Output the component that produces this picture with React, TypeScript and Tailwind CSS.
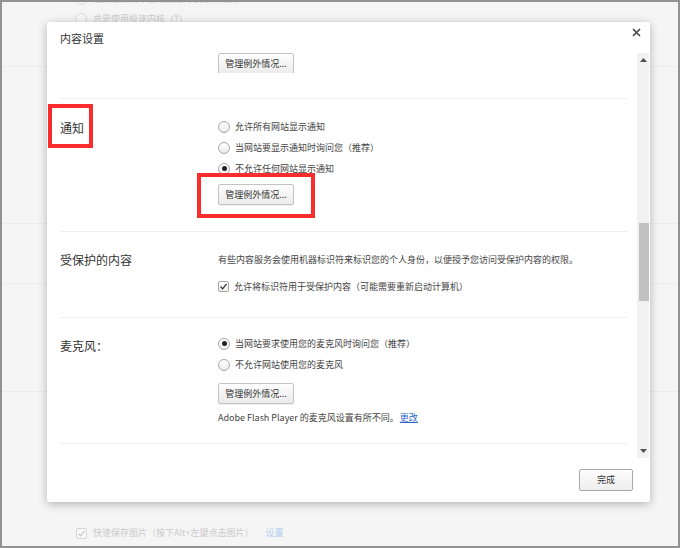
import React from "react";

const FONT = "font-['Noto_Sans_CJK_SC','Microsoft_YaHei',sans-serif]";

function Radio({ checked = false, faded = false }: { checked?: boolean; faded?: boolean }) {
  return (
    <span
      className={`flex h-[12px] w-[12px] shrink-0 items-center justify-center rounded-full border ${
        faded ? "border-[#dcdcdc] bg-[#f7f7f7]" : "border-[#a6a6a6] bg-gradient-to-b from-white to-[#ececec]"
      }`}
    >
      {checked && <span className="h-[5px] w-[5px] rounded-full bg-[#222]" />}
    </span>
  );
}

function Checkbox({ faded = false }: { faded?: boolean }) {
  return (
    <span
      className={`flex h-[11px] w-[11px] shrink-0 items-center justify-center rounded-[2px] border ${
        faded ? "border-[#d6d6d6] bg-[#f9f9f9]" : "border-[#a6a6a6] bg-gradient-to-b from-white to-[#ededed]"
      }`}
    >
      <svg width="9" height="9" viewBox="0 0 9 9">
        <path
          d="M1.5 4.6 L3.6 6.8 L7.6 1.8"
          fill="none"
          stroke={faded ? "#c9c9c9" : "#333"}
          strokeWidth="1.3"
        />
      </svg>
    </span>
  );
}

function ManageButton() {
  return (
    <button className="flex h-[21px] w-[76px] items-center justify-center rounded-[2px] border border-[#c3c3c3] bg-gradient-to-b from-[#fdfdfd] to-[#ececec] text-[9px] text-[#333] shadow-[0_1px_0_rgba(0,0,0,0.06)]">
      管理例外情况...
    </button>
  );
}

function OptionRow({ children, checked }: { children: React.ReactNode; checked?: boolean }) {
  return (
    <div className="flex h-[21px] items-center gap-[5px]">
      <Radio checked={checked} />
      <span className="text-[9px] text-[#444]">{children}</span>
    </div>
  );
}

function Divider() {
  return <div className="h-px bg-[#eeeeee]" />;
}

function Section({
  label,
  children,
  className = "",
  labelClass = "",
}: {
  label: React.ReactNode;
  children: React.ReactNode;
  className?: string;
  labelClass?: string;
}) {
  return (
    <div className={`relative flex ${className}`}>
      <div className={`w-[158px] shrink-0 text-[12px] text-[#333] ${labelClass}`}>{label}</div>
      <div className="flex flex-1 flex-col">{children}</div>
    </div>
  );
}

function Dialog() {
  return (
    <div className={`absolute left-[45px] top-[20px] flex h-[480px] w-[603px] flex-col rounded-[2px] bg-white shadow-[0_2px_10px_rgba(0,0,0,0.28)] ${FONT}`}>
      <div className="relative flex h-[31px] items-center pl-[13px] pt-[1px]">
        <span className="text-[11px] text-[#333]">内容设置</span>
        <svg className="absolute right-[9px] top-[6px]" width="9" height="9" viewBox="0 0 9 9">
          <path d="M1 1 L8 8 M8 1 L1 8" stroke="#444" strokeWidth="1.6" />
        </svg>
      </div>

      <div className="flex h-[405px]">
        <div className="flex-1 overflow-hidden pl-[13px] pr-[10px]">
          <div className="h-[45px] pl-[158px]">
            <div className="h-[20px] overflow-hidden">
              <ManageButton />
            </div>
          </div>
          <Divider />

          <Section label="通知" className="pb-[26px] pt-[17px]" labelClass="pt-[3px] text-[12.5px]">
            <OptionRow>允许所有网站显示通知</OptionRow>
            <OptionRow>当网站要显示通知时询问您（推荐）</OptionRow>
            <OptionRow checked>不允许任何网站显示通知</OptionRow>
            <div className="mt-[5px]">
              <ManageButton />
            </div>
            <div className="absolute left-[-12px] top-[5px] h-[44px] w-[45px] border-4 border-[#fb2c2c]" />
            <div className="absolute left-[137px] top-[74px] h-[45px] w-[118px] border-4 border-[#fb2c2c]" />
          </Section>
          <Divider />

          <Section label="受保护的内容" className="pb-[20px] pt-[17px]" labelClass="pt-[2px]">
            <div className="flex h-[21px] items-center text-[9px] text-[#444]">
              有些内容服务会使用机器标识符来标识您的个人身份，以便授予您访问受保护内容的权限。
            </div>
            <div className="mt-[6px] flex h-[21px] items-center gap-[5px]">
              <Checkbox />
              <span className="text-[9px] text-[#444]">允许将标识符用于受保护内容（可能需要重新启动计算机）</span>
            </div>
          </Section>
          <Divider />

          <Section label="麦克风：" className="pb-[15px] pt-[15px]" labelClass="pt-[4px]">
            <OptionRow checked>当网站要求使用您的麦克风时询问您（推荐）</OptionRow>
            <OptionRow>不允许网站使用您的麦克风</OptionRow>
            <div className="mt-[8px]">
              <ManageButton />
            </div>
            <div className="mt-[3px] flex h-[21px] items-center text-[9px] text-[#444]">
              <span>Adobe Flash Player 的麦克风设置有所不同。</span>
              <span className="ml-[1px] text-[#2d67c9] underline">更改</span>
            </div>
          </Section>
          <Divider />
        </div>

        <div className="mr-[1px] flex w-[12px] flex-col bg-[#f1f1f1]">
          <div className="flex h-[14px] items-center justify-center">
            <svg width="7" height="4" viewBox="0 0 7 4">
              <path d="M0 4 L3.5 0 L7 4 Z" fill="#505050" />
            </svg>
          </div>
          <div className="ml-[2px] mt-[156px] h-[78px] w-[10px] bg-[#c1c1c1]" />
          <div className="flex-1" />
          <div className="flex h-[14px] items-center justify-center">
            <svg width="7" height="4" viewBox="0 0 7 4">
              <path d="M0 0 L7 0 L3.5 4 Z" fill="#505050" />
            </svg>
          </div>
        </div>
      </div>

      <div className="flex justify-end pr-[17px] pt-[11px]">
        <button className="flex h-[22px] w-[54px] items-center justify-center rounded-[2px] border border-[#a9a9a9] bg-gradient-to-b from-[#fdfdfd] to-[#eeeeee] text-[9px] text-[#333]">
          完成
        </button>
      </div>
    </div>
  );
}

export default function App() {
  return (
    <div className={`relative h-[548px] w-[680px] overflow-hidden border-2 border-[#929292] bg-[#f5f5f5] ${FONT}`}>
      <div className="flex flex-col">
        <div className="-mt-[13px] flex h-[20px] items-center gap-[6px] pl-[73px]">
          <Radio faded />
          <span className="text-[9px] text-[#cfcfcf]">在兼容模式下使用极速内核打开网页</span>
        </div>
        <div className="mt-0 flex h-[20px] items-center gap-[6px] pl-[73px]">
          <Radio faded />
          <span className="text-[9px] text-[#cdcdcd]">总是使用极速内核</span>
          <span className="flex h-[11px] w-[11px] items-center justify-center rounded-full border border-[#d3d3d3] text-[8px] text-[#cdcdcd]">
            ?
          </span>
        </div>
        <div className="mt-[37px] h-px bg-[#ececec]" />
        <div className="mt-[156px] h-px bg-[#ececec]" />
        <div className="mt-[59px] h-px bg-[#ececec]" />
        <div className="mt-[107px] h-px bg-[#ececec]" />
        <div className="mt-[131px] flex h-[20px] items-center gap-[6px] pl-[74px]">
          <Checkbox faded />
          <span className="text-[9px] text-[#cacaca]">快速保存图片（按下Alt+左键点击图片）</span>
          <span className="ml-[6px] text-[9px] text-[#b3cdef]">设置</span>
        </div>
      </div>
      <Dialog />
    </div>
  );
}
